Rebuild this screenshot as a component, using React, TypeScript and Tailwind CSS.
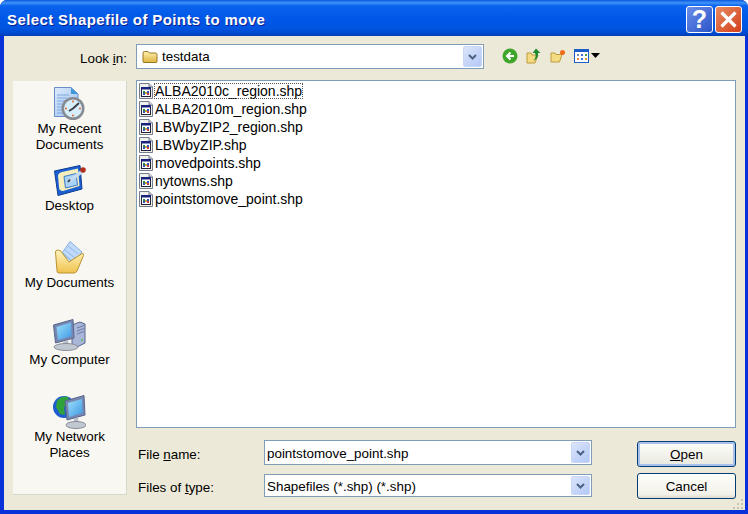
import React from "react";

function ShpIcon() {
  return (
    <svg width="16" height="16" viewBox="0 0 16 16" className="shrink-0">
      <path d="M1.500 0.500H11L14.500 4V15.500H1.500Z" fill="#f0f0ee" stroke="#747c8c" />
      <path d="M11 0.500V4H14.500" fill="#cfd3da" stroke="#747c8c" />
      <rect x="3.500" y="4.500" width="9" height="9" fill="#ffffff" stroke="#23233c" />
      <rect x="3" y="4" width="10" height="2.500" fill="#18247c" />
      <rect x="5" y="8" width="2" height="2" fill="#22894a" />
      <rect x="9" y="8" width="2" height="2" fill="#3450c8" />
      <rect x="5" y="10" width="2" height="2" fill="#3450c8" />
      <rect x="9" y="10" width="2" height="2" fill="#c83c3c" />
      <rect x="7" y="9" width="2" height="2" fill="#c8a83c" />
    </svg>
  );
}

function ComboArrow() {
  return (
    <div className="w-[19px] h-full rounded-[2px] border border-[#c8d6f8] bg-[linear-gradient(135deg,#dbe5fb,#b3c8f6)] flex items-center justify-center">
      <svg width="9" height="6" viewBox="0 0 9 6">
        <path d="M1 1L4.500 4.500L8 1" fill="none" stroke="#4d6185" strokeWidth="2" />
      </svg>
    </div>
  );
}

function Combo({ w, h, children }: { w: string; h: string; children: React.ReactNode }) {
  return (
    <div className={`${w} ${h} bg-white border border-[#7f9db9] flex items-center p-[1px] shrink-0`}>
      <div className="flex-1 flex items-center min-w-0">{children}</div>
      <ComboArrow />
    </div>
  );
}

function FolderSmall() {
  return (
    <svg width="16" height="14" viewBox="0 0 16 14">
      <defs>
        <linearGradient id="fs" x1="0" y1="0" x2="0" y2="1">
          <stop offset="0" stopColor="#fdf0b0" />
          <stop offset="1" stopColor="#e0b440" />
        </linearGradient>
      </defs>
      <path d="M1 3Q1 1.500 2.500 1.500H6L7.500 3H13.500Q15 3 15 4.500V11.500Q15 12.500 14 12.500H2Q1 12.500 1 11.500Z" fill="url(#fs)" stroke="#97791f" />
    </svg>
  );
}

const RecentIcon = () => (
  <svg width="31" height="34" viewBox="0 0 31 34">
    <defs>
      <linearGradient id="rd" x1="0" y1="0" x2="1" y2="1">
        <stop offset="0" stopColor="#dcebfb" />
        <stop offset="1" stopColor="#98bdec" />
      </linearGradient>
    </defs>
    <path d="M0.500 0.500H17L24 7V29.500H0.500Z" fill="url(#rd)" stroke="#6a8cc8" />
    <path d="M17 0.500L24 7H17Z" fill="#3f98dc" />
    <path d="M3 8H15M3 11H13M3 14H11M3 17H9M3 20H8M3 23H8M3 26H9" stroke="#7fa8e0" />
    <circle cx="19" cy="21.500" r="11.500" fill="#868b92" />
    <circle cx="19" cy="21.500" r="9" fill="#d6eefb" />
    <path d="M19 21.500L25 16M19 21.500L15 24" stroke="#3e4048" strokeWidth="2" />
    <circle cx="19" cy="14.500" r="1" fill="#e2602e" />
    <circle cx="19" cy="28.500" r="1" fill="#e2602e" />
    <circle cx="12" cy="21.500" r="1" fill="#e2602e" />
    <circle cx="26" cy="21.500" r="1" fill="#e2602e" />
  </svg>
);

const DesktopIcon = () => (
  <svg width="32" height="31" viewBox="0 0 32 31">
    <path d="M0.500 6L26 0.500L28 24L4 30.500Z" fill="#1b5fd0" stroke="#0f3c94" />
    <path d="M4 11Q4 8 8 7L24 3.500L25.500 21L9 26Q5 26 5 22Z" fill="#f6eebc" />
    <path d="M10 11.500L22 8.500L23.500 20L11.500 23Z" fill="#a8d2f6" stroke="#3f79c8" />
    <path d="M15 16L28 6.500" stroke="#c3dbf3" strokeWidth="3.500" />
    <path d="M14 17L16 14.500" stroke="#40404a" strokeWidth="2" />
    <circle cx="29" cy="5" r="2.800" fill="#b02e1c" />
  </svg>
);

const DocsIcon = () => (
  <svg width="29" height="33" viewBox="0 0 29 33">
    <defs>
      <linearGradient id="df" x1="0" y1="0" x2="0" y2="1">
        <stop offset="0" stopColor="#fff5bf" />
        <stop offset="1" stopColor="#f0c24e" />
      </linearGradient>
    </defs>
    <path d="M15 0.500L27 11L19 23L7 12Z" fill="#c0daf8" stroke="#86aee0" />
    <path d="M13 5L23 13M10 9L20 17M8 12L17 20" stroke="#8db6e8" />
    <path d="M0.500 11Q0.500 9 3 9Q6 9 8 13L14 21L27 12.500Q29 12.500 28.500 14.500L22 30Q21 32 19 32H4Q2 32 2 30Z" fill="url(#df)" stroke="#b8932f" />
  </svg>
);

const ComputerIcon = () => (
  <svg width="33" height="32" viewBox="0 0 33 32">
    <defs>
      <linearGradient id="cs" x1="0" y1="0" x2="1" y2="1">
        <stop offset="0" stopColor="#9fe0fc" />
        <stop offset="1" stopColor="#3c98e4" />
      </linearGradient>
    </defs>
    <path d="M19 6L27 3L32 5V24L24 28L19 26Z" fill="#aab6d8" stroke="#56668f" />
    <path d="M24 9L31 6.500M24 12L31 9.500M24 15L31 12.500" stroke="#6a7aa8" />
    <circle cx="29" cy="21" r="1" fill="#45c04a" />
    <path d="M0.500 6L20 0.500L21 19L2.500 24Z" fill="#7787b0" stroke="#56668f" />
    <path d="M3.500 8L18 3.500L18.500 17L5 21Z" fill="url(#cs)" />
    <path d="M10 23L15 21L16 27H11Z" fill="#b9bfc9" />
    <ellipse cx="13" cy="28" rx="12" ry="3.500" fill="#c2c8d2" stroke="#878d99" />
  </svg>
);

const NetworkIcon = () => (
  <svg width="33" height="34" viewBox="0 0 33 34">
    <defs>
      <linearGradient id="ns" x1="0" y1="0" x2="1" y2="1">
        <stop offset="0" stopColor="#9fe0fc" />
        <stop offset="1" stopColor="#3c98e4" />
      </linearGradient>
    </defs>
    <circle cx="11" cy="12" r="11" fill="#1f5cd0" />
    <path d="M4 6Q9 0 15 2L17 8L11 12L12 20L7 19L3 12Z" fill="#2fa23c" />
    <path d="M12 6L31 0.500L32 20L14 25Z" fill="#7787b0" stroke="#56668f" />
    <path d="M15 8L29 4L29.500 18L16 22Z" fill="url(#ns)" />
    <path d="M21 24L25 22L26 29H21Z" fill="#b9bfc9" />
    <ellipse cx="23" cy="30" rx="10" ry="3.500" fill="#c2c8d2" stroke="#878d99" />
  </svg>
);

function Place({ icon, label }: { icon: React.ReactNode; label: React.ReactNode }) {
  return (
    <div className="h-[77px] flex flex-col items-center">
      <div className="h-[33px] flex items-center justify-center">{icon}</div>
      <div className="text-center leading-[16px] text-black pt-[1px]">{label}</div>
    </div>
  );
}

const files = [
  "ALBA2010c_region.shp",
  "ALBA2010m_region.shp",
  "LBWbyZIP2_region.shp",
  "LBWbyZIP.shp",
  "movedpoints.shp",
  "nytowns.shp",
  "pointstomove_point.shp",
];

export default function App() {
  return (
    <div
      className="relative w-[748px] h-[514px] flex flex-col overflow-hidden rounded-t-[7px] bg-[#0831d9] text-[13.400px] text-black"
      style={{ fontFamily: '"Liberation Sans", Arial, sans-serif' }}
    >
      <div className="h-[36px] shrink-0 flex items-center justify-between pl-[7px] pr-[6px] bg-[linear-gradient(180deg,#0a58e0_0%,#3f94f8_8%,#0a62ee_16%,#0058e8_50%,#0054e0_80%,#0048cc_94%,#003cb0_100%)]">
        <span className="text-white font-bold text-[15px] tracking-[0.390px] mt-[5px] [text-shadow:1px_1px_0_#0f1f8f]">
          Select Shapefile of Points to move
        </span>
        <div className="flex gap-[2px] mt-[3px]">
          <div className="w-[27px] h-[27px] rounded-[3px] border border-white bg-[linear-gradient(135deg,#6a8ee8,#2b55c8)] flex items-center justify-center text-white font-bold text-[25px] leading-none">
            ?
          </div>
          <div className="w-[27px] h-[27px] rounded-[3px] border border-white bg-[linear-gradient(135deg,#e88a60,#d2401a)] flex items-center justify-center">
            <svg width="19" height="19" viewBox="0 0 19 19">
              <path d="M2.500 2.500L16.500 16.500M16.500 2.500L2.500 16.500" stroke="#fff" strokeWidth="3.200" />
            </svg>
          </div>
        </div>
      </div>

      <div className="flex-1 ml-[4px] mr-[3px] mb-[4px] bg-[#ece9d8] flex min-h-0">
        <div className="ml-[9px] mt-[45px] mb-[15px] w-[114px] bg-[#f8f7f2] border-r border-b border-[#d8d6c8] pt-[6px] shrink-0">
          <Place icon={<RecentIcon />} label={<>My Recent<br />Documents</>} />
          <Place icon={<DesktopIcon />} label="Desktop" />
          <Place icon={<DocsIcon />} label="My Documents" />
          <Place icon={<ComputerIcon />} label="My Computer" />
          <Place icon={<NetworkIcon />} label={<>My Network<br />Places</>} />
        </div>

        <div className="flex-1 min-w-0 flex flex-col pl-[9px] pt-[8px]">
          <div className="relative h-[25px] flex items-center shrink-0">
            <span className="absolute left-[-56px] top-[5px]">
              Look <span className="underline">i</span>n:
            </span>
            <Combo w="w-[348px]" h="h-[25px]">
              <span className="pl-[4px] flex items-center gap-[4px]">
                <FolderSmall />
                <span className="pt-[2px]">testdata</span>
              </span>
            </Combo>
            <div className="flex items-center ml-[18px] gap-[8px] mt-[-2px]">
              <svg width="16" height="16" viewBox="0 0 16 16">
                <circle cx="8" cy="8" r="7.500" fill="#3fa62c" />
                <path d="M12 8H6M8.500 4.500L5 8L8.500 11.500" fill="none" stroke="#fff" strokeWidth="2" />
              </svg>
              <svg width="16" height="16" viewBox="0 0 16 16">
                <path d="M1 5H5L6 7H12L9 15H1Z" fill="#f5dc82" stroke="#bd9a3c" />
                <path d="M7 13Q11 9 9 5H6.500L10 0.500L14.500 5H12Q13 10 7 13Z" fill="#1e8a2e" />
              </svg>
              <svg width="16" height="14" viewBox="0 0 16 14">
                <path d="M1 4H5L6 5.500H12L9.500 13H1Z" fill="#f5dc82" stroke="#bd9a3c" />
                <circle cx="12.500" cy="3.500" r="2.500" fill="#f06a1c" />
              </svg>
              <div className="flex items-center gap-[2px]">
                <svg width="15" height="14" viewBox="0 0 15 14">
                  <rect x="0.500" y="0.500" width="14" height="13" fill="#fff" stroke="#1b5ec8" />
                  <rect x="0.500" y="0.500" width="14" height="2.500" fill="#1b5ec8" />
                  <rect x="3" y="5" width="2" height="2" fill="#7a8ab0" />
                  <rect x="7" y="5" width="2" height="2" fill="#3a70d0" />
                  <rect x="11" y="5" width="2" height="2" fill="#46a046" />
                  <rect x="3" y="9" width="2" height="2" fill="#e88a50" />
                  <rect x="7" y="9" width="2" height="2" fill="#3a70d0" />
                  <rect x="11" y="9" width="2" height="2" fill="#e0a030" />
                </svg>
                <svg width="9" height="5" viewBox="0 0 9 5">
                  <path d="M0 0H9L4.500 5Z" fill="#000" />
                </svg>
              </div>
            </div>
          </div>

          <div className="mt-[11px] h-[348px] w-[600px] shrink-0 bg-white border border-[#7f9db9] pt-[1px] pl-[1px]">
            {files.map((f, i) => (
              <div key={f} className="h-[18px] flex items-center">
                <ShpIcon />
                <span className={`px-[1px] leading-[16px] text-[14px] ${i === 0 ? "outline-1 outline-dotted outline-[#555] -outline-offset-1" : ""}`}>
                  {f}
                </span>
              </div>
            ))}
          </div>

          <div className="mt-[12px] flex justify-between items-start w-[600px]">
            <div className="flex flex-col">
              <div className="flex items-center h-[25px]">
                <span className="w-[128px] pl-[2px] pt-[5px]">
                  File <span className="underline">n</span>ame:
                </span>
                <Combo w="w-[328px]" h="h-[25px]">
                  <span className="pl-[1px] pt-[3px]">pointstomove_point.shp</span>
                </Combo>
              </div>
              <div className="flex items-center h-[23px] mt-[9px]">
                <span className="w-[128px] pl-[2px] pt-[5px]">
                  Files of <span className="underline">t</span>ype:
                </span>
                <Combo w="w-[328px]" h="h-[23px]">
                  <span className="pl-[1px] pt-[3px]">Shapefiles (*.shp) (*.shp)</span>
                </Combo>
              </div>
            </div>
            <div className="flex flex-col gap-[6px] w-[99px] mt-[1px]">
              <div className="h-[26px] rounded-[3px] border border-[#003c74] bg-[linear-gradient(180deg,#fefefa,#e8e8de)] shadow-[inset_0_0_0_2px_#a8c0ec] flex items-center justify-center pt-[2px]">
                <span><span className="underline">O</span>pen</span>
              </div>
              <div className="h-[26px] rounded-[3px] border border-[#003c74] bg-[linear-gradient(180deg,#fefefa,#f2f1e9_85%,#dcd8c8)] flex items-center justify-center pt-[2px]">
                Cancel
              </div>
            </div>
          </div>
        </div>
      </div>

      <div className="absolute right-[5px] bottom-[5px] grid grid-cols-3 gap-[2px] w-[10px]">
        {[0, 1, 2, 3, 4, 5, 6, 7, 8].map((n) => (
          <div key={n} className={`w-[2px] h-[2px] ${n === 0 || n === 1 || n === 3 ? "bg-transparent" : "bg-[#c8c5b2]"}`} />
        ))}
      </div>
    </div>
  );
}
